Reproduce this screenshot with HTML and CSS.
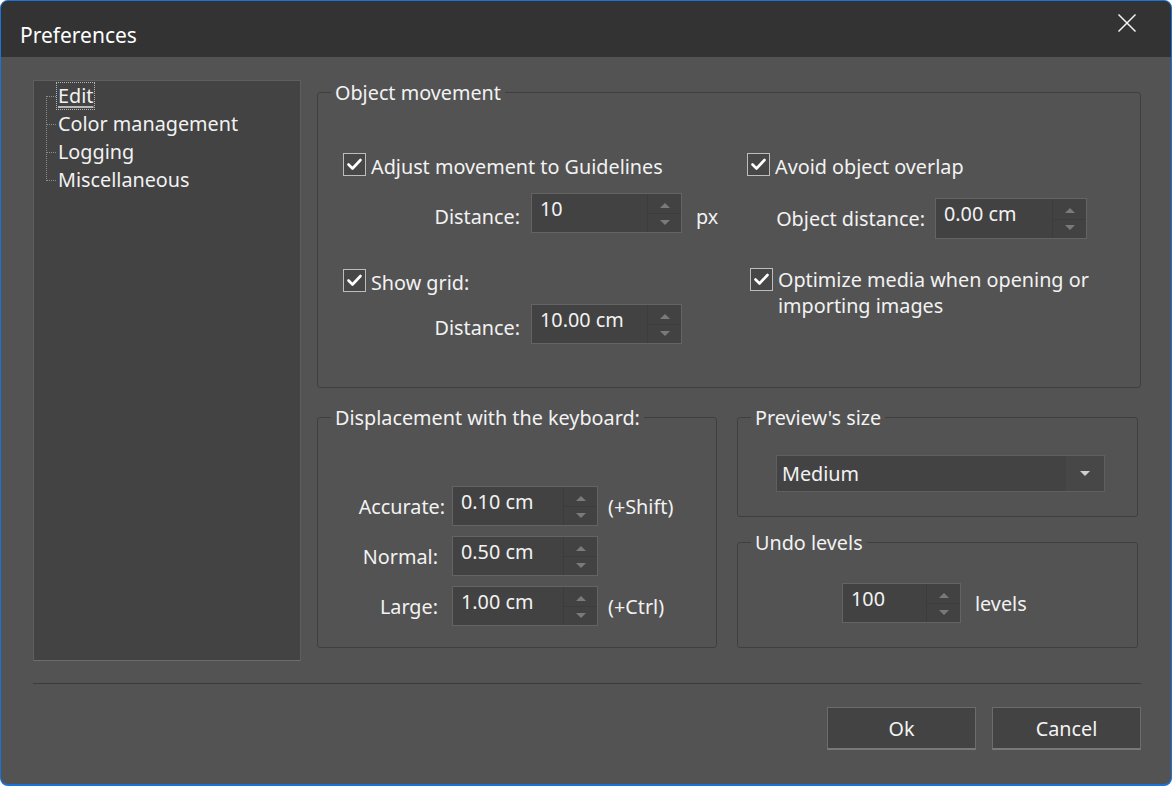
FILE: index.html
```html
<!DOCTYPE html>
<html>
<head>
<meta charset="utf-8">
<title>Preferences</title>
<link rel="stylesheet" href="styles.css">
</head>
<body>
<div class="window">
  <div class="titlebar">
    <span class="title">Preferences</span>
    <svg class="close" width="20" height="20" viewBox="0 0 20 20"><path d="M1.5 1.5 L18.5 18.5 M18.5 1.5 L1.5 18.5" stroke="#f4f4f4" stroke-width="1.5" fill="none"/></svg>
  </div>
  <div class="content">
    <div class="main">
      <div class="tree">
        <svg class="tree-lines" width="24" height="112" viewBox="0 0 24 112">
          <g stroke="#8c8c8c" stroke-width="1" stroke-dasharray="1 1" fill="none">
            <line x1="12.5" y1="15" x2="12.5" y2="100"/>
            <line x1="13" y1="15.5" x2="23" y2="15.5"/>
            <line x1="13" y1="43.5" x2="23" y2="43.5"/>
            <line x1="13" y1="71.5" x2="23" y2="71.5"/>
            <line x1="13" y1="99.5" x2="23" y2="99.5"/>
          </g>
        </svg>
        <ul class="tree-list">
          <li><span class="sel">Edit</span></li>
          <li>Color management</li>
          <li>Logging</li>
          <li>Miscellaneous</li>
        </ul>
      </div>
      <div class="panel">
        <div class="group g-object">
          <div class="group-title">Object movement</div>
          <div class="om-cols">
            <div class="om-col om-left">
              <label class="check">
                <span class="box"><svg width="21" height="21" viewBox="0 0 21 21"><path d="M4.5 10.5 L8.5 14.5 L16.5 6" stroke="#fff" stroke-width="2.6" fill="none" stroke-linecap="round" stroke-linejoin="round"/></svg></span>
                <span class="check-text">Adjust movement to Guidelines</span>
              </label>
              <div class="field f-dist1">
                <span class="flabel fl-low">Distance:</span>
                <div class="spin sp-151"><span class="val">10</span><span class="arrows"><span class="up"></span><span class="down"></span></span></div>
                <span class="suffix fl-low">px</span>
              </div>
              <label class="check c-grid">
                <span class="box"><svg width="21" height="21" viewBox="0 0 21 21"><path d="M4.5 10.5 L8.5 14.5 L16.5 6" stroke="#fff" stroke-width="2.6" fill="none" stroke-linecap="round" stroke-linejoin="round"/></svg></span>
                <span class="check-text">Show grid:</span>
              </label>
              <div class="field f-dist2">
                <span class="flabel fl-low">Distance:</span>
                <div class="spin sp-151"><span class="val">10.00 cm</span><span class="arrows"><span class="up"></span><span class="down"></span></span></div>
              </div>
            </div>
            <div class="om-col om-right">
              <label class="check">
                <span class="box"><svg width="21" height="21" viewBox="0 0 21 21"><path d="M4.5 10.5 L8.5 14.5 L16.5 6" stroke="#fff" stroke-width="2.6" fill="none" stroke-linecap="round" stroke-linejoin="round"/></svg></span>
                <span class="check-text">Avoid object overlap</span>
              </label>
              <div class="field f-objdist">
                <span class="flabel fl-obj">Object distance:</span>
                <div class="spin sp-152"><span class="val">0.00 cm</span><span class="arrows"><span class="up"></span><span class="down"></span></span></div>
              </div>
              <label class="check c-opt">
                <span class="box"><svg width="21" height="21" viewBox="0 0 21 21"><path d="M4.5 10.5 L8.5 14.5 L16.5 6" stroke="#fff" stroke-width="2.6" fill="none" stroke-linecap="round" stroke-linejoin="round"/></svg></span>
                <span class="check-text">Optimize media when opening or<br>importing images</span>
              </label>
            </div>
          </div>
        </div>
        <div class="lower">
          <div class="group g-keys">
            <div class="group-title">Displacement with the keyboard:</div>
            <div class="keys-grid">
              <span class="klabel k-acc">Accurate:</span>
              <div class="spin sp-146"><span class="val">0.10 cm</span><span class="arrows"><span class="up"></span><span class="down"></span></span></div>
              <span class="ksuffix">(+Shift)</span>
              <span class="klabel">Normal:</span>
              <div class="spin sp-146"><span class="val">0.50 cm</span><span class="arrows"><span class="up"></span><span class="down"></span></span></div>
              <span class="ksuffix"></span>
              <span class="klabel">Large:</span>
              <div class="spin sp-146"><span class="val">1.00 cm</span><span class="arrows"><span class="up"></span><span class="down"></span></span></div>
              <span class="ksuffix">(+Ctrl)</span>
            </div>
          </div>
          <div class="side">
            <div class="group g-preview">
              <div class="group-title">Preview's size</div>
              <div class="combo">
                <span class="combo-val">Medium</span>
                <span class="combo-btn"><span class="combo-arrow"></span></span>
              </div>
            </div>
            <div class="group g-undo">
              <div class="group-title">Undo levels</div>
              <div class="undo-row">
                <div class="spin sp-119"><span class="val">100</span><span class="arrows"><span class="up"></span><span class="down"></span></span></div>
                <span class="suffix">levels</span>
              </div>
            </div>
          </div>
        </div>
      </div>
    </div>
    <div class="sep"></div>
    <div class="buttons">
      <button class="btn">Ok</button>
      <button class="btn">Cancel</button>
    </div>
  </div>
</div>
</body>
</html>
```
FILE: styles.css
```css
* { box-sizing: border-box; }
html, body { margin: 0; padding: 0; background: #ffffff; }
body {
  font-family: "Noto Sans", "Open Sans", sans-serif;
  font-size: 19.8px;
  color: #f2f2f2;
}
.window {
  width: 1172px;
  height: 786px;
  border: 1px solid #1a73d9;
  border-bottom-width: 2px;
  border-radius: 8px;
  background: #535353;
  overflow: hidden;
  display: flex;
  flex-direction: column;
}
.titlebar {
  height: 56px;
  background: #333333;
  display: flex;
  justify-content: space-between;
  align-items: flex-start;
  flex: 0 0 auto;
}
.title {
  margin: 20px 0 0 19px;
  font-size: 21px;
  line-height: 28px;
  color: #ffffff;
}
.close { margin: 12px 34px 0 0; }

.content {
  padding: 23px 30px 0 32px;
  display: flex;
  flex-direction: column;
}
.main { display: flex; gap: 16px; }

/* tree */
.tree {
  width: 268px;
  height: 581px;
  background: #434343;
  border: 1px solid #5e5e5e;
  border-bottom-color: #6c6c6c;
  display: flex;
  align-items: flex-start;
}
.tree-lines { flex: 0 0 auto; }
.tree-list {
  list-style: none;
  margin: 0;
  padding: 1px 0 0 0;
}
.tree-list li {
  height: 28px;
  line-height: 28px;
  white-space: nowrap;
}
.sel {
  display: inline-block;
  line-height: 26px;
  padding: 0 1px;
  margin-left: -1px;
  outline: 1px dotted #b5b5b5;
  outline-offset: 0;
  text-decoration: underline;
  text-decoration-color: #b8b8b8;
  text-decoration-thickness: 2px;
  text-underline-offset: 3px;
}

/* panel + groups */
.panel {
  width: 824px;
  padding-top: 12px;
  display: flex;
  flex-direction: column;
}
.group {
  border: 1px solid #3f3f3f;
  border-radius: 3px;
}
.group-title {
  width: fit-content;
  margin: -13px 0 0 13px;
  padding: 1px 4px 0;
  line-height: 24px;
  background: #535353;
  white-space: nowrap;
}
.g-object { height: 296px; }
.om-cols {
  display: flex;
  padding: 48px 0 0 25px;
}
.om-left { width: 404px; }
.om-col { display: flex; flex-direction: column; }

.check {
  display: flex;
  align-items: center;
  gap: 5px;
  height: 23px;
  line-height: 26px;
  white-space: nowrap;
}
.check-text { padding-top: 4px; }
.box {
  width: 23px;
  height: 23px;
  flex: 0 0 auto;
  border: 1px solid #bdbdbd;
  background: #474747;
  display: flex;
  align-items: center;
  justify-content: center;
}
.c-grid { margin-top: 36px; }
.c-opt {
  height: auto;
  margin: 27px 0 0 3px;
  align-items: flex-start;
}
.c-opt .check-text { padding-top: 1px; }
.c-opt .box { margin-top: 2px; }

.field {
  display: flex;
  align-items: center;
  white-space: nowrap;
}
.f-dist1 { margin-top: 17px; }
.f-dist2 { margin-top: 12px; }
.f-objdist { margin-top: 22px; }
.flabel {
  width: 177px;
  text-align: right;
  margin-right: 11px;
}
.fl-low { margin-top: 6px; }
.fl-obj { width: 178px; margin-right: 10px; }
.suffix { margin-left: 14px; }
.f-dist1 .suffix { margin-top: 6px; }

/* spin box */
.spin {
  height: 40px;
  background: #424242;
  border: 1px solid #646464;
  display: flex;
  align-items: stretch;
}
.sp-151 { width: 151px; }
.sp-152 { width: 152px; height: 41px; }
.sp-146 { width: 146px; }
.sp-119 { width: 119px; }
.val {
  flex: 1 1 auto;
  padding: 2px 0 0 8px;
  line-height: 26px;
  white-space: nowrap;
}
.arrows {
  width: 34px;
  flex: 0 0 auto;
  display: flex;
  flex-direction: column;
  border-left: 1px solid #3c3c3c;
}
.up, .down {
  flex: 1 1 0;
  display: flex;
  align-items: center;
  justify-content: center;
}
.up { border-bottom: 1px solid #3c3c3c; padding-top: 3px; }
.down { padding-bottom: 2px; }
.up::after {
  content: "";
  border-left: 5px solid transparent;
  border-right: 5px solid transparent;
  border-bottom: 5px solid #7a7a7a;
}
.down::after {
  content: "";
  border-left: 5px solid transparent;
  border-right: 5px solid transparent;
  border-top: 5px solid #7a7a7a;
}

/* lower groups */
.lower {
  display: flex;
  gap: 20px;
  margin-top: 29px;
}
.g-keys { width: 400px; height: 231px; }
.keys-grid {
  display: grid;
  grid-template-columns: 127px 146px auto;
  grid-auto-rows: 40px;
  row-gap: 10px;
  column-gap: 7px;
  align-items: center;
  margin-top: 56px;
}
.klabel { text-align: right; padding-right: 7px; white-space: nowrap; }
.k-acc { padding-right: 0; }
.ksuffix { margin-left: 3px; white-space: nowrap; }

.side { width: 401px; display: flex; flex-direction: column; }
.g-preview { height: 100px; }
.combo {
  width: 329px;
  height: 37px;
  margin: 25px 0 0 38px;
  background: #434343;
  border: 1px solid #5f5f5f;
  display: flex;
  align-items: stretch;
}
.combo-val {
  flex: 1 1 auto;
  padding-left: 5px;
  line-height: 35px;
}
.combo-btn {
  width: 38px;
  background: #474747;
  display: flex;
  align-items: center;
  justify-content: center;
}
.combo-arrow {
  border-left: 5px solid transparent;
  border-right: 5px solid transparent;
  border-top: 5px solid #cfcfcf;
}
.g-undo { height: 106px; margin-top: 25px; }
.undo-row {
  display: flex;
  align-items: center;
  margin: 28px 0 0 104px;
}

/* footer */
.sep {
  height: 1px;
  background: #3c3c3c;
  margin-top: 22px;
  width: 1108px;
}
.buttons {
  display: flex;
  justify-content: flex-end;
  gap: 16px;
  margin-top: 23px;
  width: 1108px;
}
.btn {
  width: 149px;
  height: 43px;
  background: #434343;
  border: 1px solid #6c6c6c;
  border-bottom: 2px solid #787878;
  color: #f4f4f4;
  font-family: "Noto Sans", "Open Sans", sans-serif;
  font-size: 19.8px;
  padding: 0;
}
```
